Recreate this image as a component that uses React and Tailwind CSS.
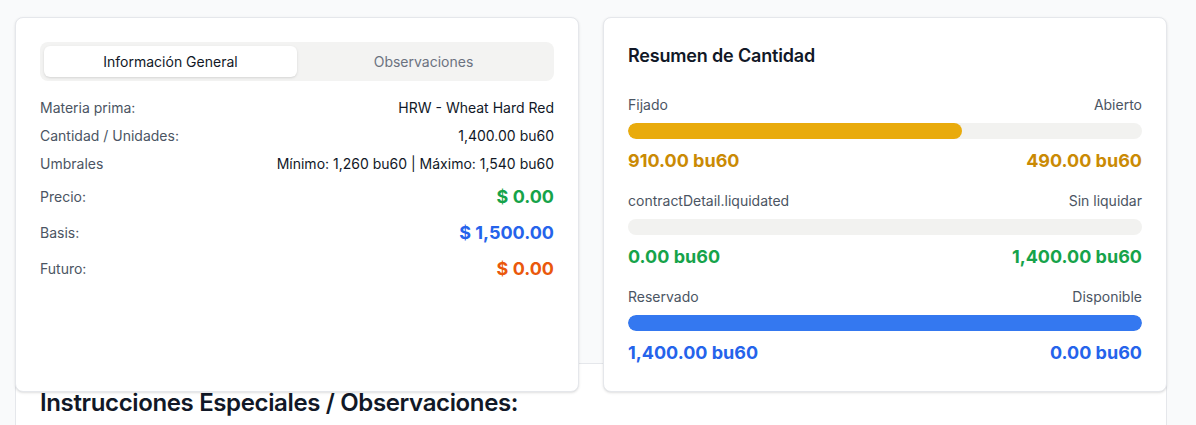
const rows = [
  { label: 'Materia prima:', value: 'HRW - Wheat Hard Red' },
  { label: 'Cantidad / Unidades:', value: '1,400.00 bu60' },
  { label: 'Umbrales', value: 'Mínimo: 1,260 bu60 | Máximo: 1,540 bu60' },
];

const prices = [
  { label: 'Precio:', value: '$ 0.00', color: 'text-[#16a34a]' },
  { label: 'Basis:', value: '$ 1,500.00', color: 'text-[#2563eb]' },
  { label: 'Futuro:', value: '$ 0.00', color: 'text-[#ea580c]' },
];

const bars = [
  {
    left: 'Fijado',
    right: 'Abierto',
    leftValue: '910.00 bu60',
    rightValue: '490.00 bu60',
    pct: 65,
    fill: 'bg-[#e9ab0c]',
    valueColor: 'text-[#ca8a04]',
  },
  {
    left: 'contractDetail.liquidated',
    right: 'Sin liquidar',
    leftValue: '0.00 bu60',
    rightValue: '1,400.00 bu60',
    pct: 0,
    fill: 'bg-[#16a34a]',
    valueColor: 'text-[#16a34a]',
  },
  {
    left: 'Reservado',
    right: 'Disponible',
    leftValue: '1,400.00 bu60',
    rightValue: '0.00 bu60',
    pct: 100,
    fill: 'bg-[#3478f0]',
    valueColor: 'text-[#2563eb]',
  },
];

const GeneralCard = () => (
  <div className="rounded-lg border border-[#e5e7eb] bg-white p-6 shadow-sm">
    <div className="grid grid-cols-2 rounded-lg bg-[#f3f3f2] p-1">
      <button className="h-[31px] rounded-md bg-white text-sm text-[#111827] shadow-sm">
        Información General
      </button>
      <button className="h-[31px] rounded-md text-sm text-[#6b7280]">
        Observaciones
      </button>
    </div>
    <div className="mt-[17px] flex flex-col gap-2">
      {rows.map((r) => (
        <div key={r.label} className="flex items-center justify-between text-sm leading-5">
          <span className="text-[#4b5563]">{r.label}</span>
          <span className="text-[#111827]">{r.value}</span>
        </div>
      ))}
      {prices.map((p, i) => (
        <div key={p.label} className={`flex items-center justify-between ${i === 0 ? 'mt-px' : ''}`}>
          <span className="text-sm text-[#4b5563]">{p.label}</span>
          <span className={`text-lg font-bold leading-7 ${p.color}`}>{p.value}</span>
        </div>
      ))}
    </div>
  </div>
);

const SummaryCard = () => (
  <div className="rounded-lg border border-[#e5e7eb] bg-white p-6 shadow-sm">
    <h3 className="text-lg font-semibold leading-7 tracking-[-0.01em] text-[#111827]">Resumen de Cantidad</h3>
    <div className="mt-[25px] flex flex-col gap-4">
      {bars.map((b) => (
        <div key={b.left}>
          <div className="flex justify-between text-sm leading-5 text-[#4b5563]">
            <span>{b.left}</span>
            <span>{b.right}</span>
          </div>
          <div className="mt-2 h-4 w-full overflow-hidden rounded-full bg-[#f2f2f0]">
            <div className={`h-full rounded-full ${b.fill}`} style={{ width: `${b.pct}%` }} />
          </div>
          <div className={`mt-2 flex justify-between text-lg font-bold leading-7 ${b.valueColor}`}>
            <span>{b.leftValue}</span>
            <span>{b.rightValue}</span>
          </div>
        </div>
      ))}
    </div>
  </div>
);

export default function App() {
  return (
    <div className="h-[425px] overflow-hidden bg-[#f9fafb] pl-[15px] pt-[17px] font-['Inter',sans-serif]">
      <div className="w-[1152px]">
        <div className="relative z-10 grid grid-cols-2 gap-6">
          <GeneralCard />
          <SummaryCard />
        </div>
        <div className="-mt-[29px] h-[100px] rounded-lg border border-[#e5e7eb] bg-white px-6 pt-[23px]">
          <h2 className="text-2xl font-semibold leading-8 tracking-[-0.015em] text-[#111827]">
            Instrucciones Especiales / Observaciones:
          </h2>
        </div>
      </div>
    </div>
  );
}
